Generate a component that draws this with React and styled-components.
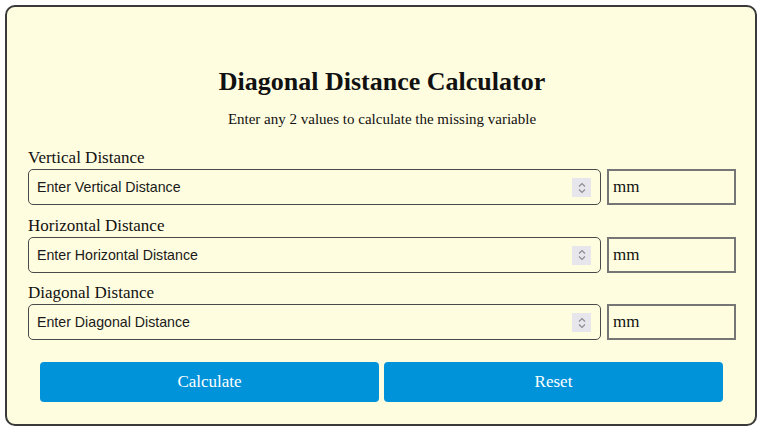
import { createGlobalStyle, styled } from "styled-components";

const GlobalStyle = createGlobalStyle`
  html, body {
    margin: 0;
    padding: 0;
    background: #ffffff;
  }
  body {
    font-family: "Liberation Serif", "Times New Roman", serif;
  }
`;

const Card = styled.div`
  box-sizing: border-box;
  margin: 5px;
  width: 752px;
  height: 421px;
  padding: 59px 19px 0 21px;
  background: #fffde0;
  border: 2px solid #3a3a3a;
  border-radius: 10px;
  color: #111;
`;

const Title = styled.h1`
  margin: 0;
  font-size: 26px;
  line-height: 31px;
  font-weight: bold;
  text-align: center;
`;

const Subtitle = styled.p`
  margin: 13px 0 0;
  font-size: 15px;
  line-height: 18px;
  text-align: center;
`;

const Fields = styled.div`
  margin-top: 20px;
  display: flex;
  flex-direction: column;
  gap: 10.5px;
`;

const Field = styled.div`
  display: flex;
  flex-direction: column;
  gap: 1px;
`;

const Label = styled.label`
  font-size: 17px;
  line-height: 20px;
`;

const Row = styled.div`
  display: flex;
  gap: 6px;
`;

const InputWrap = styled.div`
  position: relative;
  flex: 1;
`;

const NumberInput = styled.input`
  box-sizing: border-box;
  width: 100%;
  height: 36px;
  padding: 0 40px 0 8px;
  background: transparent;
  border: 1px solid #4a4a4a;
  border-radius: 5px;
  font-family: "Liberation Sans", Arial, sans-serif;
  font-size: 14.2px;
  color: #111;
  outline: none;
  &::placeholder {
    color: #1a1a1a;
    opacity: 1;
  }
`;

const Spinner = styled.span`
  position: absolute;
  right: 10px;
  top: 9px;
  width: 19px;
  height: 19px;
  background: #e6e6ec;
  display: flex;
  align-items: center;
  justify-content: center;
`;

const Unit = styled.div`
  box-sizing: border-box;
  width: 129px;
  height: 36px;
  border: 2px solid #767676;
  padding: 0 4px;
  display: flex;
  align-items: center;
  font-size: 17px;
  color: #111;
`;

const Buttons = styled.div`
  margin-top: 22px;
  padding: 0 13px 0 12px;
  display: flex;
  gap: 5px;
`;

const Button = styled.button`
  flex: 1;
  height: 40px;
  border: none;
  border-radius: 4px;
  background: #0093da;
  color: #ffffff;
  font-family: "Liberation Serif", "Times New Roman", serif;
  font-size: 17px;
  cursor: pointer;
`;

function SpinIcon() {
  return (
    <svg width="10" height="14" viewBox="0 0 10 14" fill="none">
      <path d="M2 5.5 L5 2.5 L8 5.5" stroke="#8a8a90" strokeWidth="1.1" />
      <path d="M2 8.5 L5 11.5 L8 8.5" stroke="#8a8a90" strokeWidth="1.1" />
    </svg>
  );
}

const fields = ["Vertical Distance", "Horizontal Distance", "Diagonal Distance"];

export default function App() {
  return (
    <>
      <GlobalStyle />
      <Card>
        <Title>Diagonal Distance Calculator</Title>
        <Subtitle>Enter any 2 values to calculate the missing variable</Subtitle>
        <Fields>
          {fields.map((name) => (
            <Field key={name}>
              <Label>{name}</Label>
              <Row>
                <InputWrap>
                  <NumberInput type="text" placeholder={`Enter ${name}`} />
                  <Spinner>
                    <SpinIcon />
                  </Spinner>
                </InputWrap>
                <Unit>mm</Unit>
              </Row>
            </Field>
          ))}
        </Fields>
        <Buttons>
          <Button type="button">Calculate</Button>
          <Button type="button">Reset</Button>
        </Buttons>
      </Card>
    </>
  );
}
